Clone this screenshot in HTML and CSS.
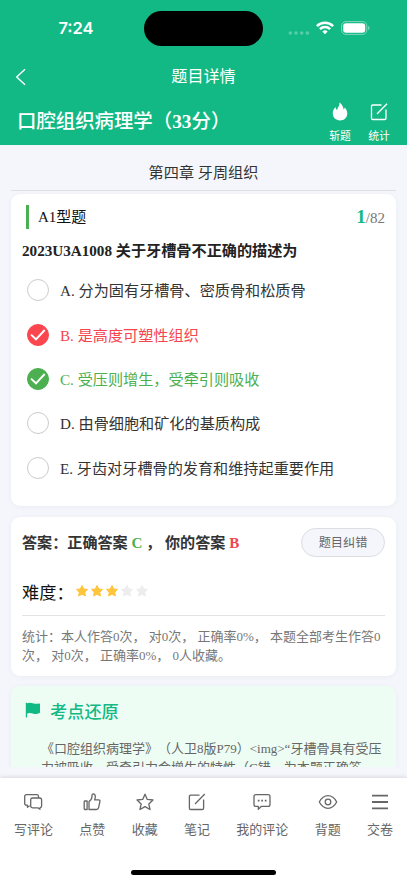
FILE: index.html
```html
<!DOCTYPE html>
<html lang="zh-CN">
<head>
<meta charset="utf-8">
<meta name="viewport" content="width=device-width, initial-scale=1">
<title>题目详情</title>
<link rel="stylesheet" href="styles.css">
</head>
<body>
<div class="app">
  <header class="header">
    <div class="status">
      <span class="time">7:24</span>
      <span class="island"></span>
      <div class="signals">
        <svg width="22" height="4" viewBox="0 0 22 4" class="dots"><circle cx="2.3" cy="2" r="1.7"/><circle cx="8" cy="2" r="1.7"/><circle cx="13.7" cy="2" r="1.7"/><circle cx="19.4" cy="2" r="1.7"/></svg>
        <svg class="wifi" width="18" height="14" viewBox="0 0 18 14" fill="none" stroke="#fff" stroke-width="2.5"><path d="M.9 5.1a11.6 11.6 0 0 1 16.2 0"/><path d="M3.9 8.2a7.3 7.3 0 0 1 10.2 0"/><path d="M9 13.2 6.3 10.5a3.9 3.9 0 0 1 5.4 0z" fill="#fff" stroke="none"/></svg>
        <svg class="battery" width="29" height="14" viewBox="0 0 29 14"><rect x=".6" y=".6" width="25.2" height="12.8" rx="4.2" fill="none" stroke="#fff" stroke-opacity=".45"/><rect x="2.2" y="2.2" width="22" height="9.6" rx="2.8" fill="#fff"/><path d="M27.2 5v4.2q1.3-.6 1.3-2.1T27.2 5z" fill="#fff" opacity=".5"/></svg>
      </div>
    </div>
    <div class="nav">
      <svg class="back" width="12" height="18" viewBox="0 0 12 18" fill="none" stroke="#fff" stroke-width="1.4"><path d="M10 1.3 1.7 9l8.3 7.8"/></svg>
      <h1 class="nav-title">题目详情</h1>
    </div>
    <div class="subject">
      <h2 class="subject-title">口腔组织病理学（<b>33</b>分）</h2>
      <div class="tool">
        <svg width="18" height="20" viewBox="0 0 18 20" fill="#fff"><path d="M8.4.6c.5 3.4-1.8 4.8-2.3 7.6C5.2 7.4 4.6 6.400 4.600 5.100 2.500 6.900 1.800 9.200 1.800 11.300c0 4.500 3.200 7.100 7.200 7.100s7.300-2.800 7.300-7c0-2.900-1.700-4.800-2.600-6.200-.1 1-.3 1.700-1.100 2.400C12.300 4.500 10.800 2.100 8.400.6z"/></svg>
        <span>斩题</span>
      </div>
      <div class="tool">
        <svg width="18" height="20" viewBox="0 0 18 20" fill="none" stroke="#fff" stroke-width="1.3"><path d="M11.500 3H2.800Q1.500 3 1.500 4.300v11.900q0 1.300 1.300 1.300h11.900q1.300 0 1.300-1.300V7.500M7 12 17 1.700"/></svg>
        <span>统计</span>
      </div>
    </div>
  </header>

  <main class="content">
    <div class="chapter">第四章 牙周组织</div>

    <section class="card question">
      <div class="type-row">
        <span class="type">A1型题</span>
        <span class="count"><b>1</b>/82</span>
      </div>
      <h3 class="stem">2023U3A1008 关于牙槽骨不正确的描述为</h3>
      <ul class="options">
        <li><i class="radio"></i><span>A. 分为固有牙槽骨、密质骨和松质骨</span></li>
        <li class="wrong"><i class="radio"><svg width="16" height="12" viewBox="0 0 16 12"><path d="M1 5.600 6 10.300 14.700 1"/></svg></i><span>B. 是高度可塑性组织</span></li>
        <li class="right"><i class="radio"><svg width="16" height="12" viewBox="0 0 16 12"><path d="M1 5.600 6 10.300 14.700 1"/></svg></i><span>C. 受压则增生，受牵引则吸收</span></li>
        <li><i class="radio"></i><span>D. 由骨细胞和矿化的基质构成</span></li>
        <li><i class="radio"></i><span>E. 牙齿对牙槽骨的发育和维持起重要作用</span></li>
      </ul>
    </section>

    <section class="card answer">
      <div class="answer-row">
        <div class="answer-text">答案：正确答案 <span class="c-right">C</span> ， 你的答案 <span class="c-wrong">B</span></div>
        <button class="report">题目纠错</button>
      </div>
      <div class="difficulty">
        <span>难度：</span>
        <div class="stars">
          <svg viewBox="0 0 14 14"><path d="m7 1.500 1.700 3.400 3.800.6-2.700 2.700.6 3.800L7 10.200 3.600 12l.6-3.800-2.700-2.700 3.800-.6z"/></svg>
          <svg viewBox="0 0 14 14"><path d="m7 1.500 1.700 3.400 3.800.6-2.700 2.700.6 3.800L7 10.200 3.600 12l.6-3.800-2.700-2.700 3.800-.6z"/></svg>
          <svg viewBox="0 0 14 14"><path d="m7 1.500 1.700 3.400 3.800.6-2.700 2.700.6 3.800L7 10.200 3.600 12l.6-3.800-2.700-2.700 3.800-.6z"/></svg>
          <svg class="off" viewBox="0 0 14 14"><path d="m7 1.500 1.700 3.400 3.800.6-2.700 2.700.6 3.800L7 10.200 3.600 12l.6-3.800-2.700-2.700 3.800-.6z"/></svg>
          <svg class="off" viewBox="0 0 14 14"><path d="m7 1.500 1.700 3.400 3.800.6-2.700 2.700.6 3.800L7 10.200 3.600 12l.6-3.800-2.700-2.700 3.800-.6z"/></svg>
        </div>
      </div>
      <p class="stats">统计：本人作答0次， 对0次， 正确率0%， 本题全部考生作答0<br>次， 对0次， 正确率0%， 0人收藏。</p>
    </section>

    <section class="card review">
      <h3 class="review-title">
        <svg width="16" height="16" viewBox="0 0 16 16" fill="#13b984"><path d="M.8.700h1.300v.6Q4.800.1 7.800 1.200t6.200.3Q15 1.100 15 2v8.300q0 .7-.8 1-3.200 1.300-6.400.2t-5.700 0v4.100H.8z"/></svg>
        考点还原
      </h3>
      <p class="review-text">《口腔组织病理学》（人卫8版P79）&lt;img&gt;“牙槽骨具有受压<br>力被吸收，受牵引力会增生的特性（C错，为本题正确答</p>
    </section>
  </main>

  <footer class="bottom">
    <nav class="tabs">
      <div class="tab"><svg viewBox=".8 0 20 20"><path d="M6.500 13.700 4.200 15.200v-2H3.300Q1.500 13.200 1.500 11.400V4.500q0-1.800 1.800-1.800h10.200q1.800 0 1.800 1.800v1.300M9.300 6h7.200q1.900 0 1.900 1.900v6q0 1.700-1.600 1.800v1.600l-2.300-1.500H9.300q-1.800 0-1.800-1.800V7.800Q7.500 6 9.300 6z"/></svg><span>写评论</span></div>
      <div class="tab"><svg viewBox="0 0 20 20"><path d="M3 9h2.100v8.500H3q-.8 0-.8-.8V9.800Q2.200 9 3 9zM7 9.600Q9.800 8 10 4.500V3.200q0-1.400 1.300-1.400 2 0 2 2.900 0 1.700-.7 3.100h3.800q1.900 0 1.500 1.900l-1.300 6q-.4 1.800-2.200 1.800H7z"/></svg><span>点赞</span></div>
      <div class="tab"><svg viewBox="0 0 20 20"><path d="m10 2.200 2.300 5.200 5.700.6-4.200 3.900 1.200 5.600-5-2.900-5 2.900 1.200-5.600L2 8l5.700-.6z"/></svg><span>收藏</span></div>
      <div class="tab"><svg viewBox="0 0 20 20"><path d="M12.500 3.200H3.700q-1.300 0-1.300 1.300v11.700q0 1.300 1.300 1.300h11.600q1.300 0 1.300-1.300V7.500M8 12 17.800 2"/></svg><span>笔记</span></div>
      <div class="tab"><svg viewBox="0 0 20 20"><path d="M3.900 2.700h12.200q1.900 0 1.900 1.900v7.800q0 1.900-1.900 1.900H9.500l-3.200 3v-3H3.900Q2 14.300 2 12.400V4.600q0-1.900 1.900-1.900z"/><path class="solid" d="M5.800 7.700h1.700v1.700H5.800zm3.500 0H11v1.700H9.300zm3.500 0h1.700v1.700h-1.700z"/></svg><span>我的评论</span></div>
      <div class="tab"><svg viewBox="0 0 20 20"><path d="M1.300 10Q4.700 3.700 10 3.700T18.700 10Q15.300 16.300 10 16.300T1.300 10z"/><circle cx="10" cy="10" r="2.800"/></svg><span>背题</span></div>
      <div class="tab"><svg viewBox="0 0 20 20" class="menu"><path d="M2 3.600h16M2 10h16M2 16.400h16"/></svg><span>交卷</span></div>
    </nav>
    <div class="home"></div>
  </footer>
</div>
</body>
</html>
```
FILE: styles.css
```css
* {
  box-sizing: border-box;
  margin: 0;
  padding: 0;
}

body {
  width: 407px;
  height: 883px;
  overflow: hidden;
  font-family: "Liberation Serif", "Noto Sans CJK SC", sans-serif;
  text-spacing-trim: space-all;
  white-space: nowrap;
  color: #333;
  background: #f4f6fb;
}

svg {
  display: block;
  flex: none;
}

.app {
  display: flex;
  flex-direction: column;
  height: 883px;
}

/* Header */
.header {
  height: 145px;
  flex: none;
  color: #fff;
  background: #13b984;
}

.status {
  display: grid;
  grid-template-columns: 144px 119px 1fr;
  height: 56px;
  padding-top: 11px;
}

.time {
  padding-left: 8px;
  font: 600 16.500px/35px Inter, sans-serif;
  text-align: center;
}

.island {
  height: 35px;
  border-radius: 18px;
  background: #000;
}

.signals {
  display: flex;
  align-items: center;
  height: 34px;
  padding-left: 25px;
}

.dots {
  margin-top: 9px;
  fill: #fff;
  opacity: .3;
}

.wifi {
  margin-left: 6px;
}

.battery {
  margin-left: 7px;
}

.nav {
  display: grid;
  grid-template-columns: 27px 1fr 27px;
  align-items: center;
  height: 42px;
}

.back {
  margin-left: 14.500px;
}

.nav-title {
  font-size: 16.100px;
  font-weight: 400;
  line-height: 24px;
  text-align: center;
}

.subject {
  display: flex;
  height: 47px;
  padding: 4px 17px 0;
}

.subject-title {
  flex: 1;
  font-size: 19.400px;
  font-weight: 500;
  line-height: 40px;
}

.tool {
  display: flex;
  flex-direction: column;
  align-items: center;
  width: 22px;
  margin-left: 17px;
  font-size: 10.800px;
  line-height: 16px;
}

.tool svg {
  margin-bottom: 6px;
}

/* Content */
.content {
  display: flex;
  flex-direction: column;
  height: 622px;
  padding: 8px 11px 0;
  overflow: hidden;
}

.chapter {
  flex: none;
  height: 38px;
  border-bottom: 1px solid #dddfe5;
  font-size: 15.150px;
  line-height: 40px;
  text-align: center;
}

.card {
  flex: none;
  padding: 0 11px;
  border-radius: 9px;
  background: #fff;
  box-shadow: 0 1px 5px rgba(40, 50, 80, .05);
}

.question {
  height: 312px;
  margin-top: 3px;
  padding-top: 11px;
}

.type-row {
  display: flex;
  justify-content: space-between;
  height: 24px;
  padding-left: 4px;
  line-height: 24px;
}

.type {
  padding-left: 9px;
  border-left: 3px solid #4caf50;
  font-size: 15px;
  color: #111;
}

.count {
  font-size: 15px;
  color: #777;
}

.count b {
  font-size: 19px;
  color: #13b984;
}

.stem {
  margin-top: 10px;
  font-size: 15.150px;
  line-height: 24px;
  color: #222;
}

.options {
  padding: 5px 0 0 5px;
  list-style: none;
}

.options li {
  display: flex;
  align-items: center;
  height: 44.400px;
  font-size: 15.150px;
}

.options span {
  padding-bottom: 2px;
}

.radio {
  display: grid;
  place-items: center;
  width: 22px;
  height: 22px;
  margin-right: 11px;
  border: 1px solid #ccc;
  border-radius: 50%;
}

.radio path {
  fill: none;
  stroke: #fff;
  stroke-width: 1.900;
}

.options .wrong {
  color: #f5454f;
}

.options .right {
  color: #4caf50;
}

.wrong .radio {
  border-color: #fc464f;
  background: #fc464f;
}

.right .radio {
  border-color: #4caf50;
  background: #4caf50;
}

.answer {
  height: 159px;
  margin-top: 11px;
  padding-top: 11px;
}

.answer-row {
  display: flex;
  justify-content: space-between;
  height: 29px;
}

.answer-text {
  font-size: 15.100px;
  font-weight: 700;
  line-height: 31px;
}

.c-right {
  color: #4caf50;
}

.c-wrong {
  color: #ee4550;
}

.report {
  width: 84px;
  height: 29px;
  border: 1px solid #dcdde3;
  border-radius: 15px;
  font: 12.200px/26px "Liberation Serif", "Noto Sans CJK SC", sans-serif;
  color: #666;
  background: #f5f6fb;
}

.difficulty {
  display: flex;
  align-items: center;
  height: 59px;
  padding-top: 10px;
  border-bottom: 1px solid #e3e3e6;
  font-size: 17.200px;
  color: #111;
}

.stars {
  display: flex;
  gap: 1px;
  margin-left: 1px;
}

.stars svg {
  width: 14px;
  height: 14px;
  fill: #ffc53d;
  stroke: #ffc53d;
  stroke-linejoin: round;
}

.stars .off {
  fill: #ededed;
  stroke: #ededed;
}

.stats {
  margin-top: 11px;
  font-size: 13px;
  line-height: 19.400px;
  color: #777;
}

.review {
  height: 120px;
  margin-top: 10px;
  padding-left: 14px;
  background: #eefdf4;
}

.review-title {
  display: flex;
  align-items: center;
  gap: 9px;
  height: 48px;
  font-size: 17.200px;
  font-weight: 500;
  color: #13b984;
}

.review-text {
  margin-top: 5px;
  padding-left: 16px;
  font-size: 13px;
  line-height: 19.400px;
  color: #666;
}

/* Bottom bar */
.bottom {
  flex: none;
  height: 105px;
  margin-top: 11px;
  background: #fff;
  box-shadow: 0 -1px 4px rgba(0, 0, 0, .12);
}

.tabs {
  display: flex;
  justify-content: space-between;
  height: 92px;
  padding: 14px 14px 0;
  font-size: 13px;
  line-height: 20px;
  color: #666;
}

.tab {
  display: flex;
  flex-direction: column;
  align-items: center;
  gap: 8px;
}

.tab svg {
  width: 20px;
  height: 20px;
  fill: none;
  stroke: #666;
  stroke-width: 1.300;
  stroke-linejoin: round;
}

.tab .solid {
  fill: #666;
  stroke: none;
}

.tab .menu {
  stroke-width: 1.900;
}

.home {
  width: 145px;
  height: 5px;
  margin: 0 auto;
  border-radius: 3px;
  background: #000;
}
```
